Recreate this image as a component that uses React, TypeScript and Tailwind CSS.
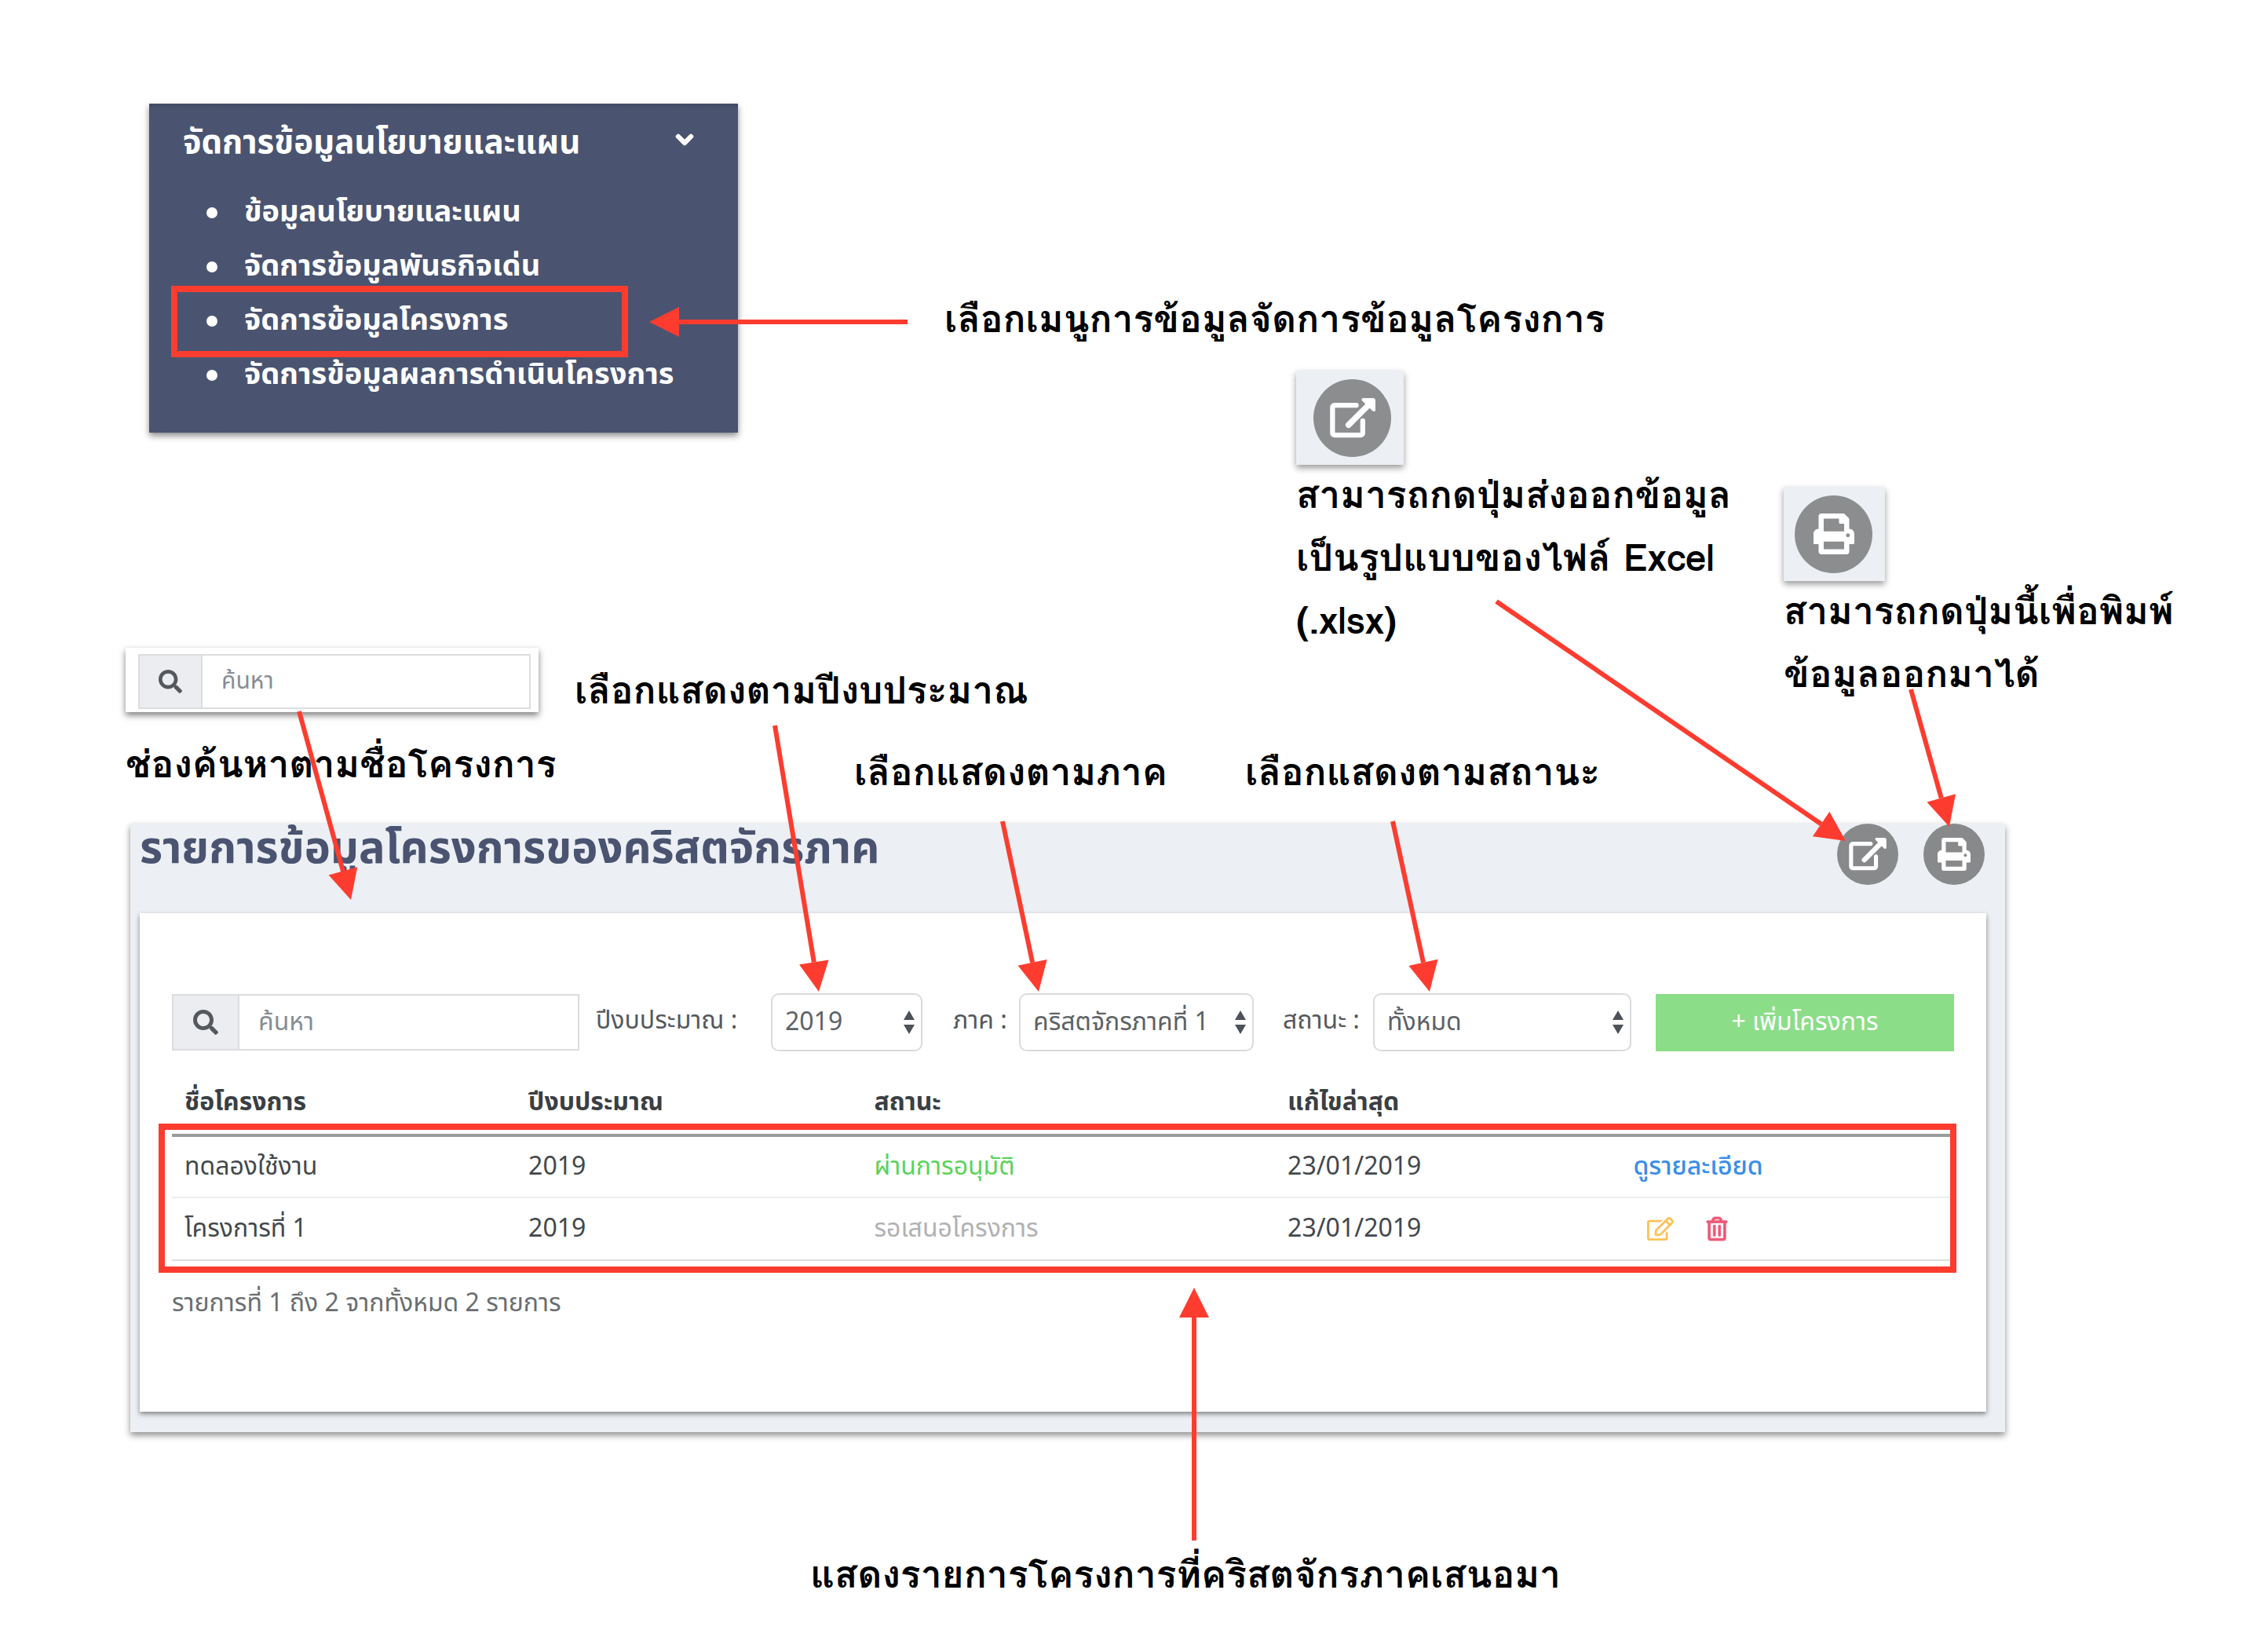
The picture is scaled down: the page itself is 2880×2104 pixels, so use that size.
import type { ReactNode } from "react";
import { FaChevronDown, FaPrint, FaRegEdit, FaRegTrashAlt, FaSearch } from "react-icons/fa";

const captionClass =
  "whitespace-nowrap font-['Loma','Liberation_Sans',sans-serif] text-[48px] font-bold leading-[80px] text-black";

const menuItems = [
  { label: "ข้อมูลนโยบายและแผน", active: false },
  { label: "จัดการข้อมูลพันธกิจเด่น", active: false },
  { label: "จัดการข้อมูลโครงการ", active: true },
  { label: "จัดการข้อมูลผลการดำเนินโครงการ", active: false },
];

type Arrow = { x1: number; y1: number; x2: number; y2: number };

const arrows: Arrow[] = [
  { x1: 1156, y1: 410, x2: 827, y2: 410 },
  { x1: 381, y1: 906, x2: 447, y2: 1146 },
  { x1: 987, y1: 924, x2: 1043, y2: 1263 },
  { x1: 1277, y1: 1046, x2: 1323, y2: 1263 },
  { x1: 1774, y1: 1046, x2: 1821, y2: 1263 },
  { x1: 1906, y1: 766, x2: 2351, y2: 1071 },
  { x1: 2434, y1: 878, x2: 2483, y2: 1053 },
  { x1: 1521, y1: 1962, x2: 1521, y2: 1640 },
];

function ArrowLayer() {
  return (
    <svg
      className="pointer-events-none absolute left-0 top-0 h-[2104px] w-[2880px]"
      viewBox="0 0 2880 2104"
      aria-hidden="true"
    >
      {arrows.map(({ x1, y1, x2, y2 }, i) => {
        const len = Math.hypot(x2 - x1, y2 - y1);
        const ux = (x2 - x1) / len;
        const uy = (y2 - y1) / len;
        const bx = x2 - ux * 38;
        const by = y2 - uy * 38;
        return (
          <g key={i} fill="#fd3c2f" stroke="none">
            <line x1={x1} y1={y1} x2={bx} y2={by} stroke="#fd3c2f" strokeWidth="6" />
            <polygon
              points={`${x2},${y2} ${bx - uy * 19},${by + ux * 19} ${bx + uy * 19},${by - ux * 19}`}
            />
          </g>
        );
      })}
    </svg>
  );
}

function ExportIcon({ className }: { className: string }) {
  return (
    <svg className={className} viewBox="0 0 176 155" fill="none" stroke="currentColor" aria-hidden="true">
      <path
        d="M102 28H18a8 8 0 0 0-8 8V135a8 8 0 0 0 8 8H119a8 8 0 0 0 8-8V88"
        strokeWidth="19"
        strokeLinecap="round"
      />
      <path d="M72 104L150 26" strokeWidth="23" strokeLinecap="round" />
      <path d="M129 6H166a4 4 0 0 1 4 4V46Z" fill="currentColor" strokeWidth="12" strokeLinejoin="round" />
    </svg>
  );
}

function SidebarMenu() {
  return (
    <nav className="ml-[30px] w-[750px] bg-[#4a5470] bg-linear-to-b from-[#414a63] to-[#4a5470] to-[8px] pb-[39px] pt-5 font-['Noto_Sans_Thai','Noto_Sans',sans-serif] font-bold text-white shadow-[0_4px_8px_rgba(0,0,0,0.45)]">
      <button type="button" className="flex w-full items-center justify-between pl-[43px] pr-[56px] text-[42px] leading-[60px]">
        จัดการข้อมูลนโยบายและแผน
        <FaChevronDown className="mb-2 size-6 overflow-visible stroke-white stroke-[50]" />
      </button>
      <ul className="ml-7 mt-6">
        {menuItems.map(({ label, active }) => (
          <li key={label} className="relative flex items-center gap-[34px] pl-[45px] text-[38px] leading-[69px]">
            <span className="size-3.5 rounded-full bg-white" />
            <a href="#" className="whitespace-nowrap">{label}</a>
            {active && <span className="absolute -bottom-3 -top-2.5 left-0 w-[582px] border-8 border-[#fd3c2f]" />}
          </li>
        ))}
      </ul>
    </nav>
  );
}

function SearchBox({ id, className, addonClass, inputClass }: { id: string; className: string; addonClass: string; inputClass: string }) {
  return (
    <div className={`flex border-2 border-[#dcdddf] bg-white ${className}`}>
      <label htmlFor={id} className={`flex items-center justify-center border-r-2 border-[#dcdddf] bg-[#ecedf0] text-[#55595d] ${addonClass}`}>
        <FaSearch aria-label="ค้นหา" />
      </label>
      <input
        id={id}
        type="text"
        placeholder="ค้นหา"
        className={`min-w-0 flex-1 bg-transparent outline-none placeholder:text-[#868d94] ${inputClass}`}
      />
    </div>
  );
}

function IconCard({ label, className, children }: { label: string; className: string; children: ReactNode }) {
  return (
    <div className={`flex h-[120px] w-fit items-center bg-[#eceff4] shadow-[0_4px_8px_rgba(0,0,0,0.4)] ${className}`}>
      <button type="button" aria-label={label} className="flex size-[99px] items-center justify-center rounded-full bg-[#8b8d8f] text-white">
        {children}
      </button>
    </div>
  );
}

function FilterSelect({ id, label, value, labelClass, selectClass }: { id: string; label: string; value: string; labelClass: string; selectClass: string }) {
  return (
    <>
      <label htmlFor={id} className={`whitespace-nowrap pb-1 text-[#55595d] ${labelClass}`}>{label}</label>
      <div className={`relative ${selectClass}`}>
        <select id={id} className="h-[74px] w-full appearance-none rounded-[10px] border-2 border-[#d9dbdd] bg-white pl-4 pr-9 text-[32px] text-[#5d6266]">
          <option>{value}</option>
        </select>
        <svg className="pointer-events-none absolute right-2.5 top-[22px] h-[30px] w-[14px] fill-[#4c5257]" viewBox="0 0 14 30" aria-hidden="true">
          <path d="M7 0L14 12H0ZM7 30L0 18H14Z" />
        </svg>
      </div>
    </>
  );
}

function ProjectTable() {
  return (
    <div className="relative">
      <table className="w-full table-fixed text-left text-[32px] text-[#43484c]">
        <thead>
          <tr className="h-[107px] border-b-4 border-[#999c9c] text-[#3a3f44] [&>th]:px-4 [&>th]:pt-6 [&>th]:font-bold">
            <th className="w-[19.3%]">ชื่อโครงการ</th>
            <th className="w-[19.4%]">ปีงบประมาณ</th>
            <th className="w-[23.2%]">สถานะ</th>
            <th className="w-[19.4%]">แก้ไขล่าสุด</th>
            <th aria-label="การจัดการ" />
          </tr>
        </thead>
        <tbody className="[&_td]:px-4">
          <tr className="h-[79px] border-b-2 border-[#eceeef]">
            <td>ทดลองใช้งาน</td>
            <td>2019</td>
            <td className="text-[#5bd35b]">ผ่านการอนุมัติ</td>
            <td>23/01/2019</td>
            <td><a href="#" className="font-medium text-[#3a8ee8]">ดูรายละเอียด</a></td>
          </tr>
          <tr className="h-[80px] border-b-2 border-[#dcdedf]">
            <td>โครงการที่ 1</td>
            <td>2019</td>
            <td className="text-[#b0b1b2]">รอเสนอโครงการ</td>
            <td>23/01/2019</td>
            <td>
              <div className="flex items-center gap-10 pl-[18px]">
                <button type="button" aria-label="แก้ไข"><FaRegEdit className="size-[34px] text-[#fbc25a]" /></button>
                <button type="button" aria-label="ลบ"><FaRegTrashAlt className="size-[30px] overflow-visible stroke-[#ef5878] stroke-[14] text-[#ef5878]" /></button>
              </div>
            </td>
          </tr>
        </tbody>
      </table>
      <div className="pointer-events-none absolute -bottom-[15px] -left-[17px] -right-[3px] top-[92px] border-8 border-[#fd3c2f]" />
    </div>
  );
}

function ProjectPanel() {
  return (
    <section className="ml-[166px] mr-[326px] mt-[26px] bg-[#eceff4] pb-[26px] pl-3 pr-6 font-['Noto_Sans_Thai','Noto_Sans',sans-serif] text-[32px] leading-[48px] shadow-[0_4px_8px_rgba(0,0,0,0.45)]">
      <header className="flex h-[114px] items-start justify-between pr-[2px]">
        <h1 className="text-[56px] font-bold leading-[66px] text-[#4a5470]">รายการข้อมูลโครงการของคริสตจักรภาค</h1>
        <div className="flex gap-8">
          <button type="button" aria-label="ส่งออกข้อมูล" className="flex size-[78px] items-center justify-center rounded-full bg-[#88898b] text-white">
            <ExportIcon className="h-[42px] w-[48px]" />
          </button>
          <button type="button" aria-label="พิมพ์" className="flex size-[78px] items-center justify-center rounded-full bg-[#88898b] text-white">
            <FaPrint className="size-[42px]" />
          </button>
        </div>
      </header>
      <div className="bg-white px-[41px] pb-[114px] pt-[102px] shadow-[0_3px_6px_rgba(0,0,0,0.45)]">
        <div className="flex items-center">
          <SearchBox id="project-search" className="h-[72px] w-[519px]" addonClass="w-[84px] text-[32px]" inputClass="pl-6 text-[32px]" />
          <FilterSelect id="year" label="ปีงบประมาณ :" value="2019" labelClass="ml-[21px] w-[223px]" selectClass="w-[193px]" />
          <FilterSelect id="region" label="ภาค :" value="คริสตจักรภาคที่ 1" labelClass="ml-[39px] w-[84px]" selectClass="w-[299px]" />
          <FilterSelect id="status" label="สถานะ :" value="ทั้งหมด" labelClass="ml-[37px] w-[115px]" selectClass="w-[329px]" />
          <button type="button" className="ml-[31px] h-[73px] flex-1 bg-[#8cdd88] text-white">+ เพิ่มโครงการ</button>
        </div>
        <ProjectTable />
        <p className="mt-[30px] text-[32px] text-[#6a6e71]">รายการที่ 1 ถึง 2 จากทั้งหมด 2 รายการ</p>
      </div>
    </section>
  );
}

export default function App() {
  return (
    <main className="relative min-h-screen overflow-hidden bg-white pt-[132px]">
      <div className="flex pl-[160px]">
        <div className="w-[1043px]">
          <SidebarMenu />
          <div className="mt-[274px] flex">
            <div className="h-[82px] w-[526px] shrink-0 bg-white pl-4 pr-2.5 pt-2 font-['Noto_Sans_Thai','Noto_Sans',sans-serif] shadow-[0_4px_8px_rgba(0,0,0,0.5)]">
              <SearchBox id="search-sample" className="h-[70px]" addonClass="w-[80px] text-[30px]" inputClass="pl-6 text-[30px]" />
            </div>
            <p className={`ml-[46px] mt-3.5 ${captionClass}`}>เลือกแสดงตามปีงบประมาณ</p>
          </div>
        </div>
        <div className="pt-[234px]">
          <p className={captionClass}>เลือกเมนูการข้อมูลจัดการข้อมูลโครงการ</p>
          <div className="ml-[448px] mt-[26px] flex">
            <div className="w-[621px]">
              <IconCard label="ส่งออกข้อมูล" className="pl-[22px] pr-4"><ExportIcon className="h-[51px] w-[58px]" /></IconCard>
              <p className={`-mt-0.5 ${captionClass}`}>สามารถกดปุ่มส่งออกข้อมูล<br />เป็นรูปแบบของไฟล์ Excel<br />(.xlsx)</p>
            </div>
            <div className="mt-[148px]">
              <IconCard label="พิมพ์" className="pl-3.5 pr-4"><FaPrint className="size-[52px]" /></IconCard>
              <p className={`-mt-0.5 ${captionClass}`}>สามารถกดปุ่มนี้เพื่อพิมพ์<br />ข้อมูลออกมาได้</p>
            </div>
          </div>
        </div>
      </div>
      <div className="mt-3.5 flex pl-[160px]">
        <p className={`w-[928px] ${captionClass}`}>ช่องค้นหาตามชื่อโครงการ</p>
        <p className={`mt-2.5 w-[498px] ${captionClass}`}>เลือกแสดงตามภาค</p>
        <p className={`mt-2.5 ${captionClass}`}>เลือกแสดงตามสถานะ</p>
      </div>
      <ProjectPanel />
      <p className={`ml-[1032px] mt-[141px] ${captionClass}`}>แสดงรายการโครงการที่คริสตจักรภาคเสนอมา</p>
      <ArrowLayer />
    </main>
  );
}
